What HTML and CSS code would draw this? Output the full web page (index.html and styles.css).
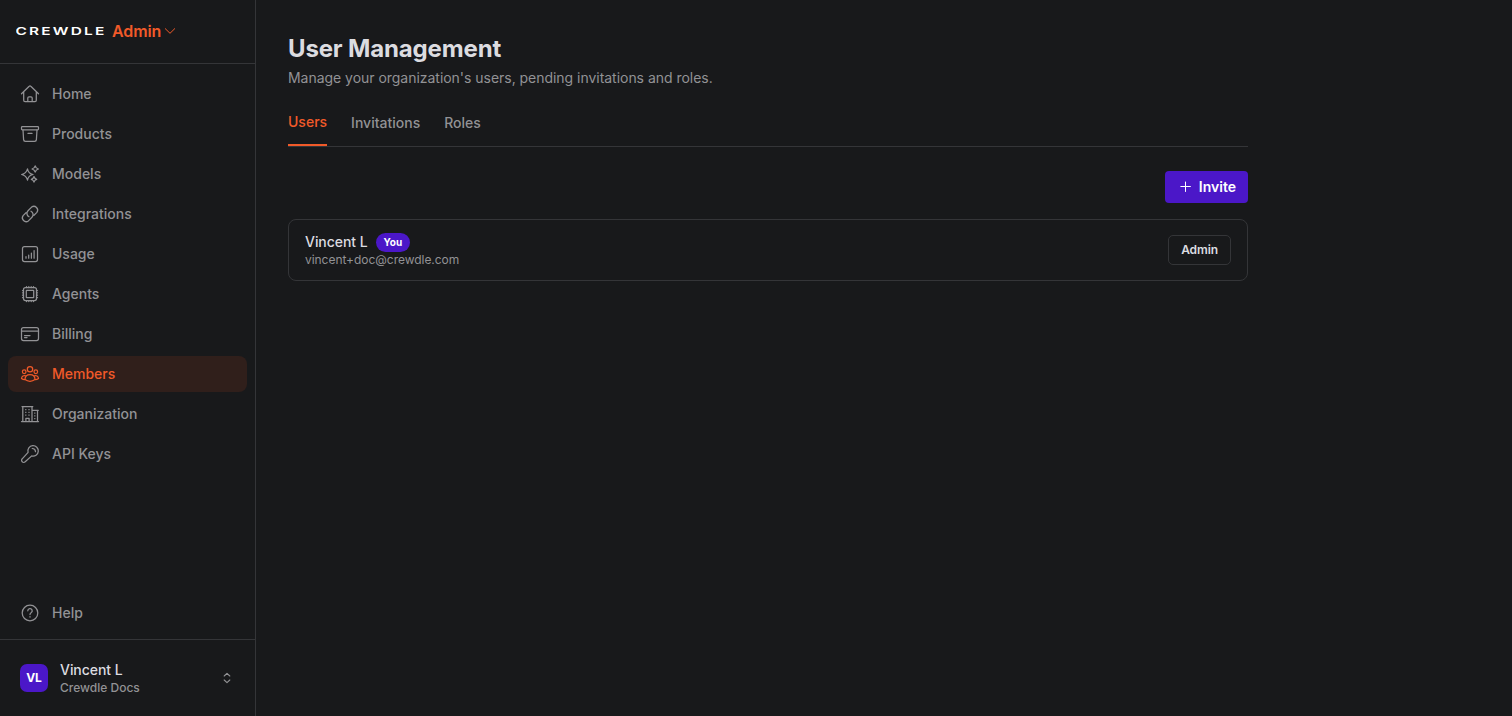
FILE: index.html
```
<!DOCTYPE html>
<html lang="en">
<head>
    <meta charset="UTF-8">
    <meta name="viewport" content="width=device-width, initial-scale=1.0">
    <title>User Management - Crewdle Admin</title>
    <link rel="stylesheet" href="styles.css">
</head>
<body>
    <aside class="sidebar">
        <div class="brand">
            <svg class="logo" width="90" height="12" viewBox="0 0 90 12">
                <text x="-0.5" y="10" textLength="91" lengthAdjust="spacingAndGlyphs">CREWDLE</text>
            </svg>
            <span class="brand-name">Admin</span>
            <svg class="icon chevron" width="12" height="8" viewBox="0 0 12 8"><path d="M1.3 1.7L6 6.300l4.700-4.600"/></svg>
        </div>

        <nav class="nav">
            <a class="nav-item">
                <svg class="icon" width="20" height="20" viewBox="0 0 20 20"><path d="M1.5 9.8L9.2 2.200a1.100 1.100 0 0 1 1.600 0l7.700 7.600M3.700 8v8.300a1.300 1.300 0 0 0 1.300 1.300h10a1.300 1.300 0 0 0 1.300-1.300V8M7.800 17.500v-3.400a1.200 1.200 0 0 1 1.200-1.200h2a1.200 1.200 0 0 1 1.200 1.200v3.400"/></svg>
                <span>Home</span>
            </a>
            <a class="nav-item">
                <svg class="icon" width="20" height="20" viewBox="0 0 20 20"><rect x="1.500" y="2.700" width="17" height="3.200" rx=".8"/><path d="M3 6l.6 9.600a1.800 1.800 0 0 0 1.800 1.700h9.200a1.800 1.800 0 0 0 1.800-1.700L17 6M8 9.400h4"/></svg>
                <span>Products</span>
            </a>
            <a class="nav-item">
                <svg class="icon" width="20" height="20" viewBox="0 0 20 20"><path d="M7.500 4.800Q8.300 9.500 13 10.500Q8.300 11.500 7.500 16.200Q6.300 11.500 1.600 10.500Q6.300 9.500 7.500 4.800ZM15.200 1.900q.6 2.500 3.200 3.100q-2.600.6-3.200 3.100q-.6-2.500-3.200-3.100q2.600-.6 3.200-3.100ZM14 12.500q.5 2.200 2.700 2.800q-2.200.6-2.700 2.800q-.5-2.200-2.700-2.800q2.200-.6 2.700-2.800Z"/></svg>
                <span>Models</span>
            </a>
            <a class="nav-item">
                <svg class="icon" width="20" height="20" viewBox="0 0 20 20"><path d="M11 7.200a3.800 3.800 0 0 1 1 6L8.400 16.900a3.800 3.800 0 0 1-5.300-5.300l2.900-2.900M9 12.800a3.800 3.800 0 0 1-1-6l3.600-3.700a3.800 3.800 0 0 1 5.300 5.300l-2.900 2.900"/></svg>
                <span>Integrations</span>
            </a>
            <a class="nav-item">
                <svg class="icon" width="20" height="20" viewBox="0 0 20 20"><rect x="2.500" y="2.500" width="15" height="15" rx="2"/><path d="M6 12.500v1.700M8.700 11v3.200M11.400 9v5.200M14.100 6.500v7.700"/></svg>
                <span>Usage</span>
            </a>
            <a class="nav-item">
                <svg class="icon" width="20" height="20" viewBox="0 0 20 20"><rect x="3.500" y="3.500" width="13" height="13" rx="2"/><rect x="6.300" y="6.300" width="7.400" height="7.400" rx=".5"/><path d="M6.500 2.500v1M8.800 2.500v1M11.200 2.500v1M13.500 2.500v1M6.500 16.500v1M8.800 16.500v1M11.200 16.500v1M13.500 16.500v1M2.500 6.500h1M2.500 8.800h1M2.500 11.200h1M2.500 13.500h1M16.500 6.500h1M16.500 8.800h1M16.500 11.200h1M16.500 13.500h1"/></svg>
                <span>Agents</span>
            </a>
            <a class="nav-item">
                <svg class="icon" width="20" height="20" viewBox="0 0 20 20"><rect x="1.500" y="3.500" width="17" height="13" rx="2"/><path d="M1.500 7h17M4.500 11.500h5.500M4.500 13.500h2.500"/></svg>
                <span>Billing</span>
            </a>
            <a class="nav-item active">
                <svg class="icon" width="20" height="20" viewBox="0 0 20 20"><circle cx="10" cy="5.200" r="2.700"/><circle cx="4.200" cy="7.700" r="1.800"/><circle cx="15.800" cy="7.700" r="1.800"/><path d="M5 15.600C5 12.500 7 10.500 10 10.500s5 2 5 5.100c-2.900 2.200-7.100 2.200-10 0ZM6.300 12C3.500 11 1.700 12.200 1.500 14.500c1.100.8 2.200 1.200 3.500 1.100M13.700 12c2.800-1 4.600.2 4.800 2.500-1.100.8-2.200 1.200-3.500 1.100"/></svg>
                <span>Members</span>
            </a>
            <a class="nav-item">
                <svg class="icon" width="20" height="20" viewBox="0 0 20 20"><path d="M1.500 17.500h17M2.800 17.500v-15M12 17.500v-15M2 2.500h10.800M17.500 17.500V6.300M12 6.300h6.300M5.900 17.500v-3.200h3.200v3.200"/><path class="dots" d="M5.200 5.500h1.200M8.400 5.500h1.200M5.200 8.300h1.200M8.400 8.300h1.200M5.200 11.100h1.200M8.400 11.100h1.200M14.200 9.200h1.200M14.200 11.900h1.200M14.200 14.600h1.200"/></svg>
                <span>Organization</span>
            </a>
            <a class="nav-item">
                <svg class="icon" width="20" height="20" viewBox="0 0 20 20"><path d="M8.100 8.300a5.200 5.200 0 1 1 3.600 3.600L5.200 17.800a2 2 0 0 1-3-3ZM12.300 4.500a3.300 3.300 0 0 1 3.200 3.200"/></svg>
                <span>API Keys</span>
            </a>
        </nav>

        <div class="help">
            <a class="nav-item">
                <svg class="icon" width="20" height="20" viewBox="0 0 20 20"><circle cx="10" cy="10" r="7.800"/><path d="M7.800 7.800a2.200 2.200 0 1 1 3.300 1.900c-.8.500-1.100.8-1.100 1.900M10 13.600v.5"/></svg>
                <span>Help</span>
            </a>
        </div>

        <div class="account">
            <div class="avatar">VL</div>
            <div class="account-text">
                <div class="name">Vincent L</div>
                <div class="org">Crewdle Docs</div>
            </div>
            <svg class="icon selector" width="8" height="12" viewBox="0 0 8 12"><path d="M1.200 4L4 1.300 6.800 4M1.200 8L4 10.700 6.800 8"/></svg>
        </div>
    </aside>

    <main class="main">
        <h1>User Management</h1>
        <p class="subtitle">Manage your organization's users, pending invitations and roles.</p>

        <div class="tabs">
            <a class="tab active">Users</a>
            <a class="tab">Invitations</a>
            <a class="tab">Roles</a>
        </div>

        <div class="actions">
            <button class="invite">
                <svg class="icon" width="12" height="12" viewBox="0 0 12 12"><path d="M5.500 1v9.500M.8 5.500h9.600"/></svg>
                <span>Invite</span>
            </button>
        </div>

        <div class="user-card">
            <div class="user">
                <div class="user-name">
                    <span class="name">Vincent L</span>
                    <span class="badge">You</span>
                </div>
                <div class="email">vincent+doc@crewdle.com</div>
            </div>
            <button class="role">Admin</button>
        </div>
    </main>
</body>
</html>
```
FILE: styles.css
```
* {
    box-sizing: border-box;
}
body {
    margin: 0;
    height: 100vh;
    display: flex;
    background-color: #18191b;
    color: #dcdce0;
    font-family: Inter, sans-serif;
    font-size: 14px;
    line-height: 20px;
    overflow: hidden;
}
button {
    font-family: inherit;
}
.icon {
    flex-shrink: 0;
    fill: none;
    stroke: currentColor;
    stroke-width: 1.25;
    stroke-linecap: round;
    stroke-linejoin: round;
}
.sidebar {
    width: 256px;
    flex-shrink: 0;
    display: flex;
    flex-direction: column;
    border-right: 1px solid #343538;
}
.brand {
    height: 64px;
    display: flex;
    align-items: center;
    padding: 0 16px 1px;
    border-bottom: 1px solid #343538;
}
.logo {
    fill: #fff;
    font-size: 10.5px;
    font-weight: 600;
    letter-spacing: 1.5px;
}
.brand-name {
    margin-left: 6px;
    color: #f15a29;
    font-size: 16px;
    font-weight: 600;
    letter-spacing: -0.1px;
}
.chevron {
    margin-left: 3px;
    color: #f15a29;
    stroke-width: 1;
}
.nav {
    flex: 1;
    display: flex;
    flex-direction: column;
    gap: 4px;
    padding: 12px 8px;
}
.nav-item {
    height: 36px;
    display: flex;
    align-items: center;
    gap: 12px;
    padding: 0 12px;
    border-radius: 8px;
    color: #929295;
    font-size: 14px;
    font-weight: 550;
    letter-spacing: 0;
}
.nav-item.active {
    background-color: #301f1b;
    color: #f15a29;
}
.dots {
    stroke-linecap: butt;
}
.help {
    padding: 8px;
}
.account {
    height: 77px;
    display: flex;
    align-items: center;
    padding: 0 24px 0 20px;
    border-top: 1px solid #343538;
}
.avatar {
    width: 28px;
    height: 28px;
    border-radius: 7px;
    background-color: #4b17c8;
    color: #fff;
    font-size: 12px;
    font-weight: 700;
    line-height: 28px;
    text-align: center;
}
.account-text {
    flex: 1;
    margin-left: 12px;
}
.name {
    font-weight: 550;
    line-height: 20px;
    letter-spacing: -0.05px;
}
.org {
    color: #929295;
    font-size: 12px;
    font-weight: 500;
    line-height: 16px;
}
.selector {
    color: #929295;
    stroke-width: 1.1;
}
.main {
    width: 960px;
    margin: 33px 0 0 32px;
}
h1 {
    margin: 0;
    font-size: 24px;
    font-weight: 650;
    line-height: 32px;
    letter-spacing: -0.15px;
}
.subtitle {
    margin: 3px 0 0;
    color: #929295;
    letter-spacing: -0.03px;
}
.tabs {
    height: 35px;
    display: flex;
    gap: 24px;
    margin-top: 24px;
    border-bottom: 1px solid #343538;
}
.tab {
    padding-top: 1px;
    color: #929295;
    font-weight: 500;
}
.tab.active {
    padding-top: 0;
    border-bottom: 2px solid #f15a29;
    color: #f15a29;
}
.actions {
    display: flex;
    justify-content: flex-end;
    margin: 24px 0 16px;
}
.invite {
    height: 32px;
    display: flex;
    align-items: center;
    gap: 7px;
    padding: 0 12px 1px 15px;
    border: 0;
    border-radius: 4px;
    background-color: #4b17c8;
    color: #fff;
    font-size: 14px;
    font-weight: 600;
}
.invite .icon {
    stroke-width: 1;
}
.user-card {
    height: 62px;
    display: flex;
    align-items: center;
    justify-content: space-between;
    padding: 0 16px;
    border: 1px solid #343538;
    border-radius: 8px;
}
.user-name {
    display: flex;
    align-items: center;
    gap: 8px;
}
.badge {
    padding: 0 8px;
    border-radius: 10px;
    background-color: #4b17c8;
    color: #fff;
    font-size: 10px;
    font-weight: 700;
    line-height: 19px;
}
.email {
    color: #929295;
    font-size: 12px;
    line-height: 16px;
    letter-spacing: -0.04px;
}
.role {
    height: 30px;
    padding: 0 12px 2px;
    border: 1px solid #343538;
    border-radius: 5px;
    background: none;
    color: #dcdce0;
    font-size: 12px;
    font-weight: 600;
    letter-spacing: -0.1px;
}
```
